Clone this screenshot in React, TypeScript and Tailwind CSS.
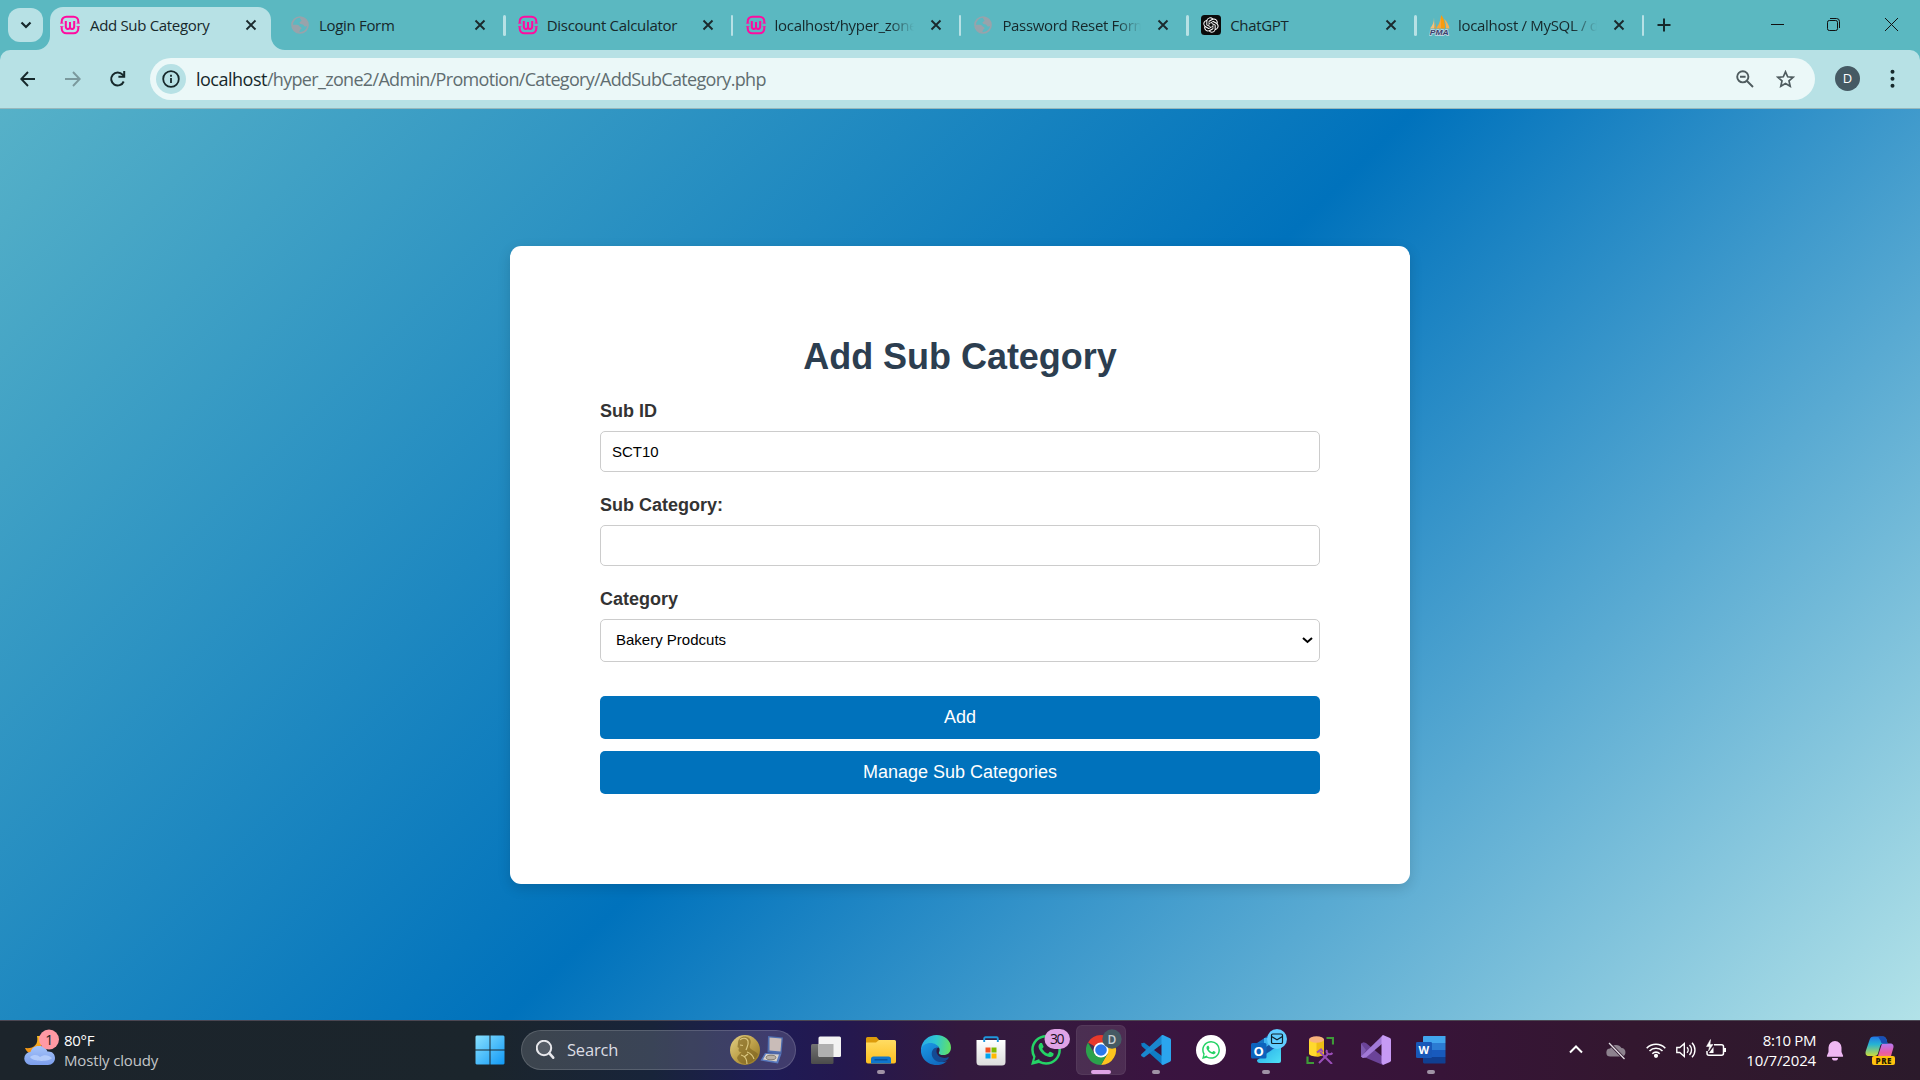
import React from "react";

type P = { className?: string };

/* ---------- favicons ---------- */
const Wamp = () => (
  <svg width="20" height="20" viewBox="0 0 20 20" fill="none" stroke="#ff0ba0">
    <path d="M1.700 8.300V6.400A4.700 4.700 0 0 1 6.400 1.700h7.200a4.700 4.700 0 0 1 4.700 4.700v1.900M1.700 11.500v2.100a4.700 4.700 0 0 0 4.700 4.700h7.200a4.700 4.700 0 0 0 4.700-4.700v-2.100" strokeWidth="2" />
    <path d="M5.800 6v5.200c0 3.400 3 3.400 4.200 1.600 1.200 1.800 4.200 1.800 4.200-1.600V6M10 7v5.600" strokeWidth="2" />
    <path d="M0 8.300h3.500M16.500 8.300H20M0 11.500h3.500M16.500 11.500H20" strokeWidth="1" opacity=".6" />
  </svg>
);
const Globe = () => (
  <svg width="20" height="20" viewBox="0 0 20 20">
    <circle cx="10" cy="10" r="8" fill="none" stroke="#98a3ab" strokeWidth="1.700" />
    <path d="M2 9.500c2 .6 4-.1 6 .4 1.800.5 1.200 1.700 2.500 2 1.500.4 1.300 1.600.2 2.300-1.200.7-.7 1.800-1.700 3.600C5 17.500 2 14 2 9.500z" fill="#98a3ab" />
    <path d="M10 2c4 0 7.500 3 8 7.500-.6 1.500-1.800 2.200-3 2-1.200-.2-1-1.700-2.200-2-1.400-.3-3.300-.2-3.300-1.700 0-1.300 1.500-1 2-2 .4-.9-1.700-1-1.500-3.800z" fill="#98a3ab" />
  </svg>
);
const Gpt = () => (
  <svg width="20" height="20" viewBox="0 0 20 20">
    <rect width="20" height="20" rx="3.500" fill="#0b0b0b" />
    <g transform="translate(2.300 2.300) scale(.64)" fill="#fff">
      <path d="M22.282 9.821a5.985 5.985 0 0 0-.516-4.910 6.046 6.046 0 0 0-6.510-2.900A6.065 6.065 0 0 0 4.981 4.180a5.985 5.985 0 0 0-3.998 2.900 6.046 6.046 0 0 0 .743 7.097 5.980 5.980 0 0 0 .510 4.911 6.051 6.051 0 0 0 6.515 2.900A5.985 5.985 0 0 0 13.260 24a6.056 6.056 0 0 0 5.772-4.206 5.990 5.990 0 0 0 3.997-2.900 6.056 6.056 0 0 0-.747-7.073zM13.260 22.430a4.476 4.476 0 0 1-2.876-1.040l.141-.081 4.779-2.758a.795.795 0 0 0 .392-.681v-6.737l2.020 1.168a.071.071 0 0 1 .038.052v5.583a4.504 4.504 0 0 1-4.494 4.494zM3.600 18.304a4.470 4.470 0 0 1-.535-3.014l.142.085 4.783 2.759a.771.771 0 0 0 .780 0l5.843-3.369v2.332a.080.080 0 0 1-.033.062L9.740 19.950a4.500 4.500 0 0 1-6.140-1.646zM2.340 7.896a4.485 4.485 0 0 1 2.366-1.973V11.600a.766.766 0 0 0 .388.676l5.815 3.355-2.020 1.168a.076.076 0 0 1-.071 0l-4.830-2.786A4.504 4.504 0 0 1 2.340 7.872zm16.597 3.855l-5.833-3.387L15.119 7.200a.076.076 0 0 1 .071 0l4.830 2.791a4.494 4.494 0 0 1-.676 8.105v-5.678a.790.790 0 0 0-.407-.667zm2.010-3.023l-.141-.085-4.774-2.782a.776.776 0 0 0-.785 0L9.409 9.230V6.897a.066.066 0 0 1 .028-.061l4.830-2.787a4.500 4.500 0 0 1 6.680 4.660zm-12.640 4.135l-2.020-1.164a.080.080 0 0 1-.038-.057V6.075a4.500 4.500 0 0 1 7.375-3.453l-.142.080L8.704 5.460a.795.795 0 0 0-.393.681zm1.097-2.365l2.602-1.500 2.607 1.500v2.999l-2.597 1.500-2.607-1.500z" />
    </g>
  </svg>
);
const Pma = () => (
  <svg width="21" height="21" viewBox="0 0 21 21">
    <path d="M5 2.500C5 7 3.500 11 1 13.500h4.500z" fill="#f7c077" />
    <path d="M7 3v10.500H5C7 10 7.300 6 7 3z" fill="#f29a2e" />
    <path d="M11.500 0c.5 5-1.500 10-4.500 13.500h6z" fill="#f9a63a" />
    <path d="M12 0c3 3 4 8 4 13.500h-4z" fill="#f89c0e" />
    <path d="M15 4c3 2.500 5 6 5.500 9.500H17c0-4-.5-7-2-9.500z" fill="#f8b052" />
    <text x="10.300" y="19.800" textAnchor="middle" fontFamily="Liberation Sans" fontWeight="700" fontStyle="italic" fontSize="8" textLength="19" lengthAdjust="spacingAndGlyphs" fill="#3a3f6b" stroke="#c8d9e6" strokeWidth="1.400" paintOrder="stroke">PMA</text>
  </svg>
);
const Close = ({ className }: P) => (
  <svg className={className} width="12" height="12" viewBox="0 0 12 12" stroke="#1b2a2d" strokeWidth="1.900">
    <path d="M1.500 1.500l9 9M10.500 1.500l-9 9" />
  </svg>
);

const tabs = [
  { t: "Login Form", icon: <Globe />, fade: false },
  { t: "Discount Calculator", icon: <Wamp />, fade: false },
  { t: "localhost/hyper_zone2", icon: <Wamp />, fade: true },
  { t: "Password Reset Form", icon: <Globe />, fade: true },
  { t: "ChatGPT", icon: <Gpt />, fade: false },
  { t: "localhost / MySQL / db", icon: <Pma />, fade: true },
];

const tabText = "font-['Open_Sans'] text-[15px] tracking-[-0.32px] leading-[21px] text-[#16282b] whitespace-nowrap";

const TabStrip = () => (
  <div className="flex h-[50px] bg-[#5bb8c1]">
    <div className="ml-2 mt-2 flex h-[34px] w-[35px] items-center justify-center rounded-[12px] bg-[#b7e1e5]">
      <svg width="12" height="8" viewBox="0 0 12 8" fill="none" stroke="#16282b" strokeWidth="2.200"><path d="M1.500 1.500L6 6l4.500-4.500" /></svg>
    </div>
    <div className="relative ml-[7px] mt-[7px] flex h-[43px] w-[221px] rounded-t-[13px] bg-[#b7e1e5]">
      <svg className="absolute -left-[14px] bottom-0" width="14" height="14" viewBox="0 0 14 14"><path d="M14 0v14H0A14 14 0 0 0 14 0z" fill="#b7e1e5" /></svg>
      <svg className="absolute -right-[14px] bottom-0" width="14" height="14" viewBox="0 0 14 14"><path d="M0 0v14h14A14 14 0 0 1 0 0z" fill="#b7e1e5" /></svg>
      <div className="ml-[10px] mt-[8px]"><Wamp /></div>
      <div className={"ml-[10px] mt-[8px] w-[155px] " + tabText}>Add Sub Category</div>
      <Close className="mt-[12px] shrink-0" />
    </div>
    <div className="ml-[19px] flex">
      {tabs.map((tab, i) => (
        <div key={i} className="flex h-[50px] w-[227.800px] shrink-0">
          <div className="mt-[15px] w-[21px]">{tab.icon}</div>
          <div className={"ml-[8px] mt-[15px] w-[139px] overflow-hidden " + tabText + (tab.fade ? " [mask-image:linear-gradient(90deg,#000_82%,transparent_100%)]" : "")}>{tab.t}</div>
          <Close className="ml-[16px] mt-[19px] shrink-0" />
          <div className="ml-[17px] mt-[15px] h-[21px] w-[2.500px] rounded bg-[#b7e1e5]" />
        </div>
      ))}
    </div>
    <svg className="mt-[18px]" width="14" height="14" viewBox="0 0 14 14" stroke="#16282b" strokeWidth="2"><path d="M7 .5v13M.5 7h13" /></svg>
    <svg className="ml-[100px] mt-[18px]" width="13" height="13" viewBox="0 0 13 13" stroke="#111" strokeWidth="1"><path d="M0 6.500h13" /></svg>
    <svg className="ml-[43px] mt-[18px]" width="13" height="13" viewBox="0 0 13 13" fill="none" stroke="#111" strokeWidth="1"><rect x=".5" y="2.500" width="10" height="10" rx="1.800" /><path d="M3 .5h6.500a3 3 0 0 1 3 3V10" /></svg>
    <svg className="ml-[45px] mt-[18px]" width="13" height="13" viewBox="0 0 13 13" stroke="#111" strokeWidth="1"><path d="M0 0l13 13M13 0L0 13" /></svg>
  </div>
);

const Toolbar = () => (
  <div className="bg-[#5bb8c1]">
    <div className="flex h-[59px] items-start rounded-t-[10px] border-b border-[#97b8bc] bg-[#b7e1e5]">
      <svg className="ml-[20px] mt-[21px]" width="16" height="16" viewBox="0 0 16 16" fill="none" stroke="#16282b" strokeWidth="1.900"><path d="M15 8H1.500M8 1L1.300 8 8 15" /></svg>
      <svg className="ml-[29px] mt-[21px]" width="16" height="16" viewBox="0 0 16 16" fill="none" stroke="#7b999d" strokeWidth="1.900"><path d="M0 8h14M8 1l6.700 7L8 15" /></svg>
      <svg className="ml-[28px] mt-[20px]" width="18" height="18" viewBox="0 0 18 18" fill="none" stroke="#16282b" strokeWidth="2"><path d="M14.700 11.500A6.500 6.500 0 1 1 13.600 4.700L15.200 6.500" /><path d="M15.200 1v5.800H9.400" /></svg>
      <div className="ml-[23px] mt-[8px] flex h-[42px] w-[1665px] items-center rounded-full bg-[#ebf8f8]">
        <div className="ml-[6px] flex h-[30px] w-[30px] items-center justify-center rounded-full bg-[#b7e1e5]">
          <svg width="18" height="18" viewBox="0 0 18 18" fill="none" stroke="#16282b" strokeWidth="1.800"><circle cx="9" cy="9" r="7.800" /><path d="M9 8v5M9 4.800v2" /></svg>
        </div>
        <div className="ml-[10px] w-[1532px] whitespace-nowrap font-['Open_Sans'] text-[18px] leading-[24px] tracking-[-0.680px] text-[#5f6d70]">
          <span className="tracking-[-0.500px] text-[#16282b]">localhost</span>/hyper_zone2/Admin/Promotion/Category/AddSubCategory.php
        </div>
        <svg className="ml-[8px]" width="18" height="18" viewBox="0 0 18 18" fill="none" stroke="#4f5c5f" strokeWidth="1.900"><circle cx="6.800" cy="6.800" r="5.600" /><path d="M11 11l6 6M4 6.800h5.600" /></svg>
        <svg className="ml-[22px]" width="19" height="18" viewBox="0 0 19 18" fill="none" stroke="#4f5c5f" strokeWidth="1.700"><path d="M9.500 1.800l2.200 5 5.400.5-4.100 3.600 1.200 5.300-4.700-2.800-4.700 2.800L6 10.900 1.900 7.300l5.400-.5z" /></svg>
      </div>
      <div className="ml-[20px] mt-[16px] flex h-[25px] w-[25px] items-center justify-center rounded-full bg-[#455a64] font-['Open_Sans'] text-[13px] text-white">D</div>
      <svg className="ml-[30px] mt-[19px]" width="5" height="20" viewBox="0 0 5 20" fill="#16282b"><circle cx="2.500" cy="2.800" r="2" /><circle cx="2.500" cy="9.800" r="2" /><circle cx="2.500" cy="16.800" r="2" /></svg>
    </div>
  </div>
);

const label = "block text-[18px] leading-[20px] font-bold text-[#333]";
const button = "block h-[43px] w-full rounded-[5px] bg-[#0072bc] text-center text-[18px] leading-[42px] text-white";

const Page = () => (
  <div className="h-[911px] bg-[linear-gradient(135deg,#56b1c8_0%,#0072bc_50%,#b2e2e8_100%)] font-['Liberation_Sans',sans-serif]">
    <div className="flex h-full items-center justify-center">
      <div className="h-[638px] w-[900px] rounded-[11px] bg-white px-[90px] pt-[90px] shadow-[0_4px_13px_rgba(0,0,0,0.14)]">
        <h1 className="text-center text-[36px] leading-[41px] font-bold text-[#2c3e50] tracking-[-0.03px]">Add Sub Category</h1>
        <label className={label + " mt-[24px]"}>Sub ID</label>
        <div className="mt-[10px] h-[41px] rounded-[5px] border border-[#ccc] px-[11px] text-[15px] leading-[39px] text-black">SCT10</div>
        <label className={label + " mt-[23px]"}>Sub Category:</label>
        <div className="mt-[10px] h-[41px] rounded-[5px] border border-[#ccc]" />
        <label className={label + " mt-[23px]"}>Category</label>
        <div className="mt-[10px] flex h-[43px] items-center justify-between rounded-[5px] border border-[#ccc] pr-[6px] pl-[15px] text-[15px] text-black">
          <span className="pt-px">Bakery Prodcuts</span>
          <svg width="11" height="7" viewBox="0 0 11 7" fill="none" stroke="#000" strokeWidth="2"><path d="M1 1l4.500 4L10 1" /></svg>
        </div>
        <button className={button + " mt-[34px]"}>Add</button>
        <button className={button + " mt-[12px]"}>Manage Sub Categories</button>
      </div>
    </div>
  </div>
);

/* ---------- taskbar icons ---------- */
const Weather = () => (
  <svg width="36" height="40" viewBox="0 0 36 40">
    <defs>
      <linearGradient id="cl" x1="0" y1="0" x2="0" y2="1"><stop offset="0" stopColor="#a6c4fa" /><stop offset="1" stopColor="#7c9eec" /></linearGradient>
      <linearGradient id="mo" x1="0" y1="0" x2="0" y2="1"><stop offset="0" stopColor="#fbbf24" /><stop offset="1" stopColor="#f08a12" /></linearGradient>
    </defs>
    <path d="M13 8c2 9-4 13-12 12 2 6 9 8 16 4V8z" fill="url(#mo)" />
    <path d="M7 37a6.500 6.500 0 0 1-.5-13C8 19.500 11 18 15 18c5 0 7 2 8.500 5.500C28 23 31 26 31 30s-3 7-7 7z" fill="url(#cl)" />
    <path d="M6 29c4-3 8-2 10 0 4-3 9-2 12 1-3 4-19 4-22-1z" fill="#bcd2fc" opacity=".8" />
    <circle cx="25" cy="11.500" r="10" fill="#ff99a4" />
    <text x="25.300" y="16.500" textAnchor="middle" fontFamily="Open Sans" fontSize="14" fill="#222">1</text>
  </svg>
);
const Start = () => (
  <svg width="30" height="30" viewBox="0 0 30 30">
    <defs><linearGradient id="st" gradientUnits="userSpaceOnUse" x1="0" y1="0" x2="30" y2="30"><stop offset="0" stopColor="#8be2ff" /><stop offset="1" stopColor="#0f98f5" /></linearGradient></defs>
    <path fill="url(#st)" d="M1.500.5h13v14h-14v-13zM15.500.5h13l1 1v13h-14zM.5 15.500h14v14h-13l-1-1zM15.500 15.500h14v13l-1 1h-13z" />
  </svg>
);
const Medal = () => (
  <svg className="shrink-0" width="54" height="32" viewBox="0 0 54 32">
    <defs><linearGradient id="md" x1="0" y1="0" x2="1" y2="1"><stop offset="0" stopColor="#e2cf86" /><stop offset=".5" stopColor="#bfa24b" /><stop offset="1" stopColor="#8c7020" /></linearGradient></defs>
    <circle cx="15" cy="16" r="15" fill="url(#md)" />
    <path d="M8 9c0-5 5-7.500 9-6 4 1 4.500 5 3 8-.7 2-.3 3 1 4 2 1.500 5 3 7 5-1 4-6 9-12 10-5 0-8-3-9-6 1-3 3-4 4.500-6-1.500 0-3-.3-3-2l.5-2-1.500-1z" fill="#806622" opacity=".65" />
    <path d="M10 6c2-2.500 7-2.500 8 1s-1 6-2 9M10 11l3 .5M11 21c4 1 6 4 6 9M17 18c3 1 6 4 7 7M14 23l4-3" stroke="#dcc881" fill="none" strokeWidth="1.200" />
    <path d="M38 2l15 1.500-1.500 16-14-1z" fill="#4d6cae" />
    <path d="M39.500 3.500l12 1-1 13-11-1z" fill="#c9bcb8" />
    <path d="M35 19l16.500.5-3.500 10-17.500-3z" fill="#5878bd" />
    <path d="M36 20l13 .5-2.500 7L33 25.500z" fill="#d8d2ca" />
    <ellipse cx="41" cy="23.500" rx="4.800" ry="2.300" fill="#b8b1a7" stroke="#7f7970" />
  </svg>
);
const TaskView = () => (
  <svg className="shrink-0" width="31" height="30" viewBox="0 0 31 30">
    <defs><linearGradient id="tv" x1="0" y1="0" x2="0" y2="1"><stop offset="0" stopColor="#737373" /><stop offset="1" stopColor="#4b4b4b" /></linearGradient></defs>
    <rect x="0" y="8" width="22.500" height="20" rx="1.500" fill="url(#tv)" />
    <rect x="7.500" y=".5" width="22.500" height="20.500" rx="1.500" fill="#f3f3f3" />
    <path d="M7.500 8h15v13H9a1.500 1.500 0 0 1-1.500-1.500z" fill="#b0b0b0" />
  </svg>
);
const Explorer = () => (
  <svg className="shrink-0" width="30" height="28" viewBox="0 0 30 28">
    <defs><linearGradient id="ex" x1="0" y1="0" x2="0" y2="1"><stop offset="0" stopColor="#ffdc63" /><stop offset="1" stopColor="#fdbf1f" /></linearGradient></defs>
    <path d="M0 1.500A1.500 1.500 0 0 1 1.500 0h9l3 3.500V8H0z" fill="#dd9b0b" />
    <path d="M0 5.500h10l3-2.500h15.500A1.500 1.500 0 0 1 30 4.500v20a2 2 0 0 1-2 2H2a2 2 0 0 1-2-2z" fill="url(#ex)" />
    <path d="M5 26.500V22a2.500 2.500 0 0 1 2.500-2.500h15A2.500 2.500 0 0 1 25 22v4.500z" fill="#0f76cd" />
    <path d="M8.500 22.800h13" stroke="#0a4f94" strokeWidth="1.300" />
  </svg>
);
const Edge = () => (
  <svg className="shrink-0" width="30" height="30" viewBox="0 0 30 30">
    <defs>
      <linearGradient id="e1" x1="0" y1=".3" x2="1" y2=".4"><stop offset="0" stopColor="#2aa9e8" /><stop offset=".5" stopColor="#2fc8d0" /><stop offset="1" stopColor="#62e065" /></linearGradient>
      <linearGradient id="e2" x1="0" y1="0" x2=".7" y2="1"><stop offset="0" stopColor="#1c9be6" /><stop offset="1" stopColor="#1068bd" /></linearGradient>
    </defs>
    <path d="M0 14C1 5 8 0 15.500 0 24 0 30 6 30 12.500c0 5-3.500 7.500-7.500 7.500-3.500 0-5.200-1.200-4.600-2.600 1.500-2.200 1-6.400-3.900-7.400C8 9 2 11 0 16z" fill="url(#e1)" />
    <path d="M0 15c1-5 5-7 9.500-7 4 0 7.500 2.300 8.500 5-4-1-7 3-5 8s8 7.500 13 5C22 30.500 15 31 9.500 29 3 26.500-.5 20.500 0 15z" fill="url(#e2)" />
    <path d="M13 13.500c-3.500 3-3 9 1.500 12 4 2.700 9 1.700 12-1 .9-.9 1.700-2.500 1-2.500-5 2.200-10 0-11.500-3.500-.8-2-.7-3.800.5-5.500-1.200-.5-2.500-.3-3.500.5z" fill="#144a93" />
  </svg>
);
const Store = () => (
  <svg className="shrink-0" width="30" height="30" viewBox="0 0 30 30">
    <defs><linearGradient id="so" x1="0" y1="0" x2="0" y2="1"><stop offset="0" stopColor="#fff" /><stop offset="1" stopColor="#dcdcdc" /></linearGradient></defs>
    <path d="M.5 4h29v22a3.500 3.500 0 0 1-3.500 3.500H4A3.500 3.500 0 0 1 .5 26z" fill="url(#so)" />
    <path d="M8.200 6V2.500A1.300 1.300 0 0 1 9.500 1.200h11a1.300 1.300 0 0 1 1.300 1.300V6" fill="none" stroke="#1f97dc" strokeWidth="1.900" />
    <path d="M9.500 11.500H14.500v5h-5z" fill="#f25022" /><path d="M15.500 11.500h5v5h-5z" fill="#7fba00" />
    <path d="M9.500 17.500h5v5h-5z" fill="#00a4ef" /><path d="M15.500 17.500h5v5h-5z" fill="#ffb900" />
  </svg>
);
const waPath = "M.057 24l1.687-6.163a11.867 11.867 0 0 1-1.587-5.946C.160 5.335 5.495 0 12.050 0a11.817 11.817 0 0 1 8.413 3.488 11.824 11.824 0 0 1 3.480 8.414c-.003 6.557-5.338 11.892-11.893 11.892a11.900 11.900 0 0 1-5.688-1.448L.057 24zm6.597-3.807c1.676.995 3.276 1.591 5.392 1.592 5.448 0 9.886-4.434 9.889-9.885.002-5.462-4.415-9.890-9.881-9.892-5.452 0-9.887 4.434-9.889 9.884a9.860 9.860 0 0 0 1.510 5.260l-.999 3.648 3.978-1.607zm11.387-5.464c-.074-.124-.272-.198-.570-.347-.297-.149-1.758-.868-2.031-.967-.272-.099-.470-.149-.669.149-.198.297-.768.967-.941 1.165-.173.198-.347.223-.644.074-.297-.149-1.255-.462-2.390-1.475-.883-.788-1.480-1.761-1.653-2.059-.173-.297-.018-.458.130-.606.134-.133.297-.347.446-.521.151-.172.200-.296.300-.495.099-.198.050-.372-.025-.521-.075-.148-.669-1.611-.916-2.206-.242-.579-.487-.501-.669-.510l-.570-.010c-.198 0-.520.074-.792.372s-1.040 1.016-1.040 2.479 1.065 2.876 1.213 3.074c.149.198 2.095 3.200 5.076 4.487.709.306 1.263.489 1.694.626.712.226 1.360.194 1.872.118.571-.085 1.758-.719 2.006-1.413.248-.695.248-1.290.173-1.414z";
const WhatsApp = () => (
  <svg className="shrink-0" width="40" height="36" viewBox="0 0 40 36">
    <path transform="translate(0 6) scale(1.250)" d={waPath} fill="#25d366" />
    <rect x="13.500" y="0" width="25.500" height="20" rx="10" fill="#dfa3e6" />
    <text x="26.300" y="15" textAnchor="middle" fontFamily="Open Sans" fontSize="14" fill="#1b101c" textLength="14.500">30</text>
  </svg>
);
const WhatsAppRound = () => (
  <svg className="shrink-0" width="30" height="30" viewBox="0 0 30 30"><circle cx="15" cy="15" r="15" fill="#fff" /><path transform="translate(6 6) scale(.75)" d={waPath} fill="#25d366" /></svg>
);
const Chrome = () => (
  <svg className="shrink-0" width="36" height="36" viewBox="0 0 36 36">
    <g transform="translate(0 6)">
      <path d="M15 15L2 7.500A15 15 0 0 1 28 7.500H15z" fill="#e8392b" />
      <path d="M15 15V7.500h13A15 15 0 0 1 15 30l6.500-11.200z" fill="#fcc31e" />
      <path d="M15 15l6.500 3.800L15 30A15 15 0 0 1 2 7.500l6.500 11.300z" fill="#2ba24c" />
      <circle cx="15" cy="15" r="7.500" fill="#fff" /><circle cx="15" cy="15" r="5.800" fill="#2a78ec" />
    </g>
    <circle cx="26" cy="10" r="9.700" fill="#455a64" />
    <text x="26" y="14.500" textAnchor="middle" fontFamily="Open Sans" fontWeight="600" fontSize="12" fill="#c9d0d3">D</text>
  </svg>
);
const VsCode = () => (
  <svg className="shrink-0" width="30" height="30" viewBox="0 0 30 30">
    <path d="M1.800 8.200c-.5-.4-1.100-.4-1.500 0l.3 2.700L20.500 29l1.500 1v-8.200L3 7.500z" fill="#0f7cc4" />
    <path d="M22 0v8.200L3 22.500.6 21.200c-.8-.8-.8-1.600 0-2.300L20.500.6z" fill="#1a88cf" />
    <path d="M22 0l7 3.200c.7.400 1 1 1 1.800v20c0 .8-.3 1.400-1 1.800L22 30c-.8 0-1.500-.5-1.500-1.200V1.200C20.500.5 21.200 0 22 0z" fill="#2ba5ee" />
  </svg>
);
const Outlook = () => (
  <svg className="shrink-0" width="38" height="36" viewBox="0 0 38 36">
    <defs><linearGradient id="ol" x1="0" y1="0" x2="1" y2="1"><stop offset="0" stopColor="#23a7e8" /><stop offset="1" stopColor="#4fe0f5" /></linearGradient></defs>
    <path d="M6 14l12-8 12 8v14H6z" fill="#1573c4" />
    <path d="M13 9h12v12H13z" fill="#40b4f0" />
    <path d="M30 15v17a2 2 0 0 1-2 2H9a3 3 0 0 1-3-3z" fill="url(#ol)" /><path d="M30 15L14 25l-4-4 14-9z" fill="#1353a5" />
    <rect x="0" y="14" width="15.500" height="15.500" rx="1.500" fill="#0c63bd" />
    <text x="7.700" y="26.600" textAnchor="middle" fontFamily="Open Sans" fontWeight="700" fontSize="13" fill="#fff">O</text>
    <circle cx="26" cy="10" r="10" fill="#60cdff" />
    <rect x="20.500" y="5" width="11" height="9.500" rx="1.300" fill="none" stroke="#102028" strokeWidth="1.200" /><path d="M20.500 7.500l5.500 3.300 5.500-3.300" fill="none" stroke="#102028" strokeWidth="1.200" />
  </svg>
);
const Ssms = () => (
  <svg className="shrink-0" width="28" height="28" viewBox="0 0 28 28">
    <path d="M3 3.500v14c0 4 15 4 15 0v-14z" fill="#ffd92e" /><path d="M10.500 4v16.500c4 0 7.500-1 7.500-3v-14z" fill="#eebd15" />
    <ellipse cx="10.500" cy="3.500" rx="7.500" ry="3.200" fill="#f8b27c" />
    <path d="M20.500 2H27v6.500M1.500 20.500V27H8" fill="none" stroke="#3e9a38" strokeWidth="2.200" />
    <path d="M13 27l9-9M14 16l12 12" stroke="#9a4fb8" strokeWidth="2" /><path d="M11 16.500l4-3 2 2.500M21 14c-1.500 3 2.500 6 5.500 3" fill="none" stroke="#9a4fb8" strokeWidth="2" />
  </svg>
);
const VisualStudio = () => (
  <svg className="shrink-0" width="30" height="30" viewBox="0 0 30 30">
    <path d="M0 8.500l2.500-1.200L5 8l17 14v8L3 22l-1.500 1L0 21.500z" fill="#6b4398" />
    <path d="M0 21.500V8.500l5 6.500-4 7z" fill="#7f5bb0" />
    <path d="M0 21.500L22 0v8L5 22.500l-3 .5z" fill="#a179d6" />
    <path d="M22 0l7 3c.7.400 1 1 1 1.800v20.400c0 .8-.3 1.400-1 1.800l-7 3-1.500-2V2z" fill="#c79af5" />
  </svg>
);
const Word = () => (
  <svg className="shrink-0" width="30" height="28" viewBox="0 0 30 28">
    <path d="M7.500 0H29l.5.500V7H7V.5z" fill="#41a5ee" /><path d="M7 7h22.500v7H7z" fill="#2b7cd3" /><path d="M7 14h22.500v7H7z" fill="#185abd" /><path d="M7 21h22.500v6l-.5.500H8l-1-1z" fill="#103f91" />
    <rect x="0" y="6" width="16" height="16" rx="1.300" fill="#1858b8" />
    <text x="7.900" y="18" textAnchor="middle" fontFamily="Open Sans" fontWeight="700" fontSize="11" fill="#fff">W</text>
  </svg>
);
const Copilot = () => (
  <svg width="31" height="30" viewBox="0 0 31 30">
    <defs>
      <linearGradient id="c1" x1="0" y1="0" x2="0" y2="1"><stop offset="0" stopColor="#2275e8" /><stop offset=".4" stopColor="#25b3d4" /><stop offset="1" stopColor="#cddc3a" /></linearGradient>
      <linearGradient id="c2" x1="0" y1="0" x2="0" y2="1"><stop offset="0" stopColor="#b57af2" /><stop offset=".6" stopColor="#ea5aa4" /><stop offset="1" stopColor="#f7826a" /></linearGradient>
    </defs>
    <path d="M17 7.500h8c3 0 4 2 3.300 4.500L26 20c-.7 2-1.500 3-3.500 3H12z" fill="url(#c2)" />
    <path d="M9 .5h9c2 0 3 1.500 3.500 3l1 4h-4c-2 0-3 1-3.500 3l-2 7c-.5 1.500-1.500 2.500-3.500 2.500H4c-3 0-4-2-3.200-5L4.500 4C5.200 1.500 6.500.5 9 .5z" fill="url(#c1)" />
    <path d="M13 .5h5c2 0 3 1.500 3.500 3l1 4h-4c-2 0-2 0-3-3z" fill="#184fb5" />
    <rect x="7" y="20" width="23" height="9" rx="2" fill="#ffc20e" />
    <text x="18.500" y="27.500" textAnchor="middle" fontFamily="Open Sans" fontWeight="800" fontSize="8" textLength="16" fill="#2a1c00">PRE</text>
  </svg>
);

const TaskItem = ({ children, h, running, active }: { children: React.ReactNode; h?: string; running?: boolean; active?: boolean }) => (
  <div className={"relative flex h-[50px] w-[50px] shrink-0 justify-center rounded-[6px] border " + (active ? "border-white/5 bg-white/10" : "border-transparent")}>
    <div className={"flex w-[30px] items-start justify-start " + (h ?? "mt-[9px]")}>{children}</div>
    {running && <span className="absolute bottom-0 h-[4px] w-[8px] rounded-full bg-[#a093a6]" />}
    {active && <span className="absolute bottom-0 h-[4px] w-[20px] rounded-full bg-[#dfa3e6]" />}
  </div>
);

const ui = "font-['Open_Sans'] whitespace-nowrap";

const Taskbar = () => (
  <div className="flex h-[60px] items-start border-t border-[#4b4753] bg-[linear-gradient(90deg,#1c242b_0%,#1b252c_25%,#18243a_34%,#1e1b55_40%,#24184f_44%,#33193e_50%,#351a3e_54%,#3a1440_60%,#371438_75%,#33172f_85%,#2b1a2b_100%)]">
    <div className="ml-[24px] mt-[7px] h-[40px] w-[36px]"><Weather /></div>
    <div className={"ml-[4px] mt-[8.500px] w-[410.500px] text-[15px] leading-[20px] " + ui}>
      <div className="tracking-[-0.300px] text-white">80°F</div>
      <div className="tracking-[-0.150px] text-[#c3c6c9]">Mostly cloudy</div>
    </div>
    <div className="mt-[14px] w-[30px]"><Start /></div>
    <div className="ml-[16.500px] mt-[9px] flex h-[40px] w-[275px] items-center rounded-full border border-white/15 bg-white/15">
      <svg className="ml-[14px] shrink-0" width="20" height="20" viewBox="0 0 20 20" fill="none" stroke="#e8e8ec" strokeWidth="2"><circle cx="8" cy="8" r="7.200" fill="#ffffff22" /><path d="M13.200 13.200l4 4.500" strokeWidth="2.600" strokeLinecap="round" /></svg>
      <div className={"ml-[11px] w-[163px] shrink-0 pt-px text-[16.500px] tracking-[-0.200px] text-[#dcdde4] " + ui}>Search</div>
      <Medal />
    </div>
    <div className="ml-[5px] mt-[4px] flex gap-[5px]">
      <TaskItem h="mt-[10px]"><TaskView /></TaskItem>
      <TaskItem h="mt-[11px]" running><Explorer /></TaskItem>
      <TaskItem><Edge /></TaskItem>
      <TaskItem h="mt-[10px]"><Store /></TaskItem>
      <TaskItem h="mt-[3px]"><WhatsApp /></TaskItem>
      <TaskItem h="mt-[3px]" active><Chrome /></TaskItem>
      <TaskItem running><VsCode /></TaskItem>
      <TaskItem><WhatsAppRound /></TaskItem>
      <TaskItem h="mt-[3px]" running><Outlook /></TaskItem>
      <TaskItem h="mt-[10px]"><Ssms /></TaskItem>
      <TaskItem><VisualStudio /></TaskItem>
      <TaskItem h="mt-[10px]" running><Word /></TaskItem>
    </div>
    <svg className="ml-[113px] mt-[24px]" width="14" height="9" viewBox="0 0 14 9" fill="none" stroke="#fff" strokeWidth="2"><path d="M1 7.500l6-6 6 6" /></svg>
    <svg className="ml-[23px] mt-[21px]" width="21" height="18" viewBox="0 0 21 18"><path d="M4.500 14.500a4 4 0 0 1-.3-8A6.500 6.500 0 0 1 15.500 6a4.300 4.300 0 0 1 .5 8.500z" fill="#8d828e" /><path d="M3 1l15.500 16" stroke="#2f162d" strokeWidth="3" /><path d="M3 1l15.500 16" stroke="#e6dfe6" strokeWidth="1.300" /></svg>
    <svg className="ml-[19px] mt-[21px]" width="20" height="16" viewBox="0 0 20 16" fill="none" stroke="#fff" strokeWidth="1.600"><path d="M.7 6.200a13 13 0 0 1 18.600 0M3.500 9a9.200 9.200 0 0 1 13 0M6.300 11.700a5.200 5.200 0 0 1 7.400 0" /><circle cx="10" cy="13.800" r="1.300" fill="#fff" /></svg>
    <svg className="ml-[10px] mt-[20px]" width="20" height="18" viewBox="0 0 20 18" fill="none" stroke="#fff" strokeWidth="1.400"><path d="M.8 6.500h3l4.500-4v13l-4.500-4h-3zM11 6.200a4 4 0 0 1 0 5.600M13.500 4a7.200 7.200 0 0 1 0 10M16 1.700a10.500 10.500 0 0 1 0 14.600" /></svg>
    <svg className="ml-[10px] mt-[18px]" width="20" height="20" viewBox="0 0 20 20" fill="none" stroke="#fff" strokeWidth="1.500"><path d="M8 5.800h7.500a2 2 0 0 1 2 2v6.400a2 2 0 0 1-2 2H3a2 2 0 0 1-2-2V12" /><path d="M19 9v4" strokeWidth="2" /><path d="M4.500.5L.5 7.500h3L2.500 12l4.500-6.500H4z" fill="#fff" strokeWidth=".5" /><path d="M3 14h4.500V8z" fill="#fff" stroke="none" /></svg>
    <div className={"ml-[18px] mt-[8.500px] flex w-[72px] flex-col items-end text-[15px] leading-[20px] text-white " + ui}>
      <div className="tracking-[-0.400px]">8:10 PM</div>
      <div className="tracking-[-0.150px]">10/7/2024</div>
    </div>
    <svg className="ml-[10px] mt-[20px]" width="18" height="20" viewBox="0 0 18 20" fill="#efb8f3"><path d="M9 0a6.500 6.500 0 0 1 6.500 6.500V11l1.500 3.500c.3.800 0 1.300-.8 1.300H1.800C1 15.800.7 15.300 1 14.500L2.500 11V6.500A6.500 6.500 0 0 1 9 0zM6 17h6a3 2.600 0 0 1-6 0z" /></svg>
    <div className="ml-[21px] mt-[15px]"><Copilot /></div>
  </div>
);

export default function App() {
  return (
    <div className="h-[1080px] w-[1920px] overflow-hidden">
      <TabStrip />
      <Toolbar />
      <Page />
      <Taskbar />
    </div>
  );
}
